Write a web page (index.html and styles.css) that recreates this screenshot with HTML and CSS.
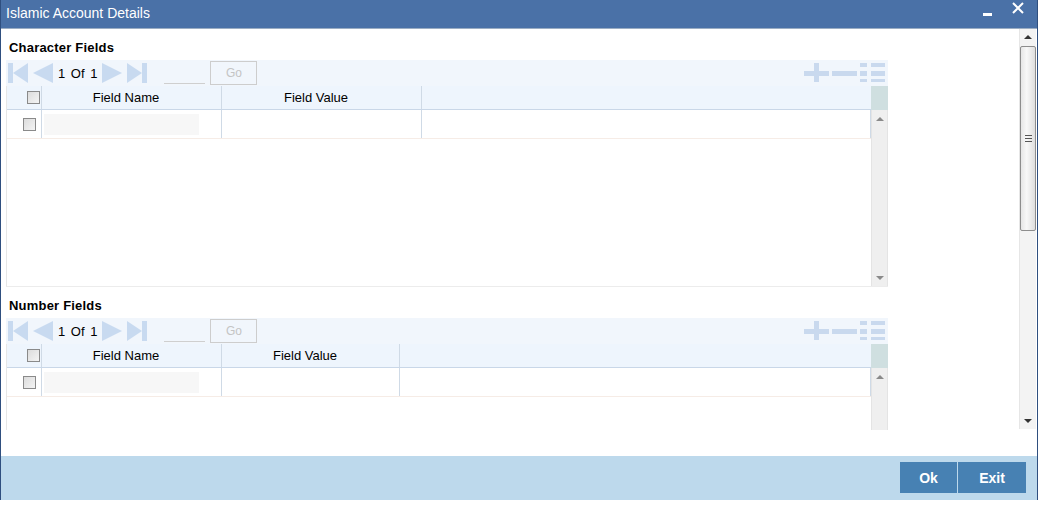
FILE: index.html
```html
<!DOCTYPE html>
<html>
<head>
<meta charset="utf-8">
<title>Islamic Account Details</title>
<link rel="stylesheet" href="styles.css">
</head>
<body>
<div class="window">
  <div class="titlebar">
    <span class="title">Islamic Account Details</span>
    <div class="win-ctrls">
      <span class="minimize"></span>
      <svg class="close" width="12" height="12" viewBox="0 0 12 12"><path d="M1 1 L11 11 M11 1 L1 11" stroke="#fff" stroke-width="2"/></svg>
    </div>
  </div>
  <div class="body">
    <div class="content">
      <section class="block block-char">
        <h2 class="heading">Character Fields</h2>
        <div class="toolbar">
          <div class="nav">
            <svg class="nav-ic" width="20" height="20" viewBox="0 0 20 20"><rect x="0" y="0" width="5" height="20" fill="#c8daf0"/><polygon points="20,0 20,20 5,10" fill="#c8daf0"/></svg>
            <svg class="nav-ic" width="20" height="20" viewBox="0 0 20 20"><polygon points="20,0 20,20 0,10" fill="#c8daf0"/></svg>
            <span class="pages">1 Of 1</span>
            <svg class="nav-ic" width="20" height="20" viewBox="0 0 20 20"><polygon points="0,0 0,20 20,10" fill="#c8daf0"/></svg>
            <svg class="nav-ic" width="20" height="20" viewBox="0 0 20 20"><polygon points="0,0 0,20 15,10" fill="#c8daf0"/><rect x="15" y="0" width="5" height="20" fill="#c8daf0"/></svg>
            <span class="goto"></span>
            <span class="go">Go</span>
          </div>
          <div class="actions">
            <svg width="26" height="20" viewBox="0 0 26 20"><rect x="0" y="8" width="25" height="5" fill="#c9d9ee"/><rect x="10" y="0" width="5" height="19" fill="#c9d9ee"/></svg>
            <svg width="26" height="20" viewBox="0 0 26 20"><rect x="0" y="8" width="25" height="5" fill="#c9d9ee"/></svg>
            <svg width="26" height="20" viewBox="0 0 26 20"><rect x="0" y="0" width="7" height="4" fill="#c9d9ee"/><rect x="11" y="0" width="14" height="4" fill="#c9d9ee"/><rect x="0" y="8" width="7" height="5" fill="#c9d9ee"/><rect x="11" y="8" width="14" height="5" fill="#c9d9ee"/><rect x="0" y="16" width="7" height="3" fill="#c9d9ee"/><rect x="11" y="16" width="14" height="3" fill="#c9d9ee"/></svg>
          </div>
        </div>
        <div class="grid-wrap tall">
          <div class="grid">
            <div class="hdr">
              <div class="c c-chk hchk"><span class="chk"></span></div>
              <div class="c c-name">Field Name</div>
              <div class="c c-val wide">Field Value</div>
              <div class="c c-rest"></div>
            </div>
            <div class="row">
              <div class="c c-chk"><span class="chk"></span></div>
              <div class="c c-name"><span class="inp"></span></div>
              <div class="c c-val wide"></div>
              <div class="c c-rest"></div>
            </div>
          </div>
          <div class="vscroll">
            <div class="vs-head"></div>
            <div class="vs-track"><span class="arr up"></span><span class="arr down"></span></div>
          </div>
        </div>
      </section>
      <section class="block block-num">
        <h2 class="heading">Number Fields</h2>
        <div class="toolbar">
          <div class="nav">
            <svg class="nav-ic" width="20" height="20" viewBox="0 0 20 20"><rect x="0" y="0" width="5" height="20" fill="#c8daf0"/><polygon points="20,0 20,20 5,10" fill="#c8daf0"/></svg>
            <svg class="nav-ic" width="20" height="20" viewBox="0 0 20 20"><polygon points="20,0 20,20 0,10" fill="#c8daf0"/></svg>
            <span class="pages">1 Of 1</span>
            <svg class="nav-ic" width="20" height="20" viewBox="0 0 20 20"><polygon points="0,0 0,20 20,10" fill="#c8daf0"/></svg>
            <svg class="nav-ic" width="20" height="20" viewBox="0 0 20 20"><polygon points="0,0 0,20 15,10" fill="#c8daf0"/><rect x="15" y="0" width="5" height="20" fill="#c8daf0"/></svg>
            <span class="goto"></span>
            <span class="go">Go</span>
          </div>
          <div class="actions">
            <svg width="26" height="20" viewBox="0 0 26 20"><rect x="0" y="8" width="25" height="5" fill="#c9d9ee"/><rect x="10" y="0" width="5" height="19" fill="#c9d9ee"/></svg>
            <svg width="26" height="20" viewBox="0 0 26 20"><rect x="0" y="8" width="25" height="5" fill="#c9d9ee"/></svg>
            <svg width="26" height="20" viewBox="0 0 26 20"><rect x="0" y="0" width="7" height="4" fill="#c9d9ee"/><rect x="11" y="0" width="14" height="4" fill="#c9d9ee"/><rect x="0" y="8" width="7" height="5" fill="#c9d9ee"/><rect x="11" y="8" width="14" height="5" fill="#c9d9ee"/><rect x="0" y="16" width="7" height="3" fill="#c9d9ee"/><rect x="11" y="16" width="14" height="3" fill="#c9d9ee"/></svg>
          </div>
        </div>
        <div class="grid-wrap short">
          <div class="grid">
            <div class="hdr">
              <div class="c c-chk hchk"><span class="chk"></span></div>
              <div class="c c-name">Field Name</div>
              <div class="c c-val narrow">Field Value</div>
              <div class="c c-rest"></div>
            </div>
            <div class="row">
              <div class="c c-chk"><span class="chk"></span></div>
              <div class="c c-name"><span class="inp"></span></div>
              <div class="c c-val narrow"></div>
              <div class="c c-rest"></div>
            </div>
          </div>
          <div class="vscroll">
            <div class="vs-head"></div>
            <div class="vs-track"><span class="arr up"></span><span class="arr down"></span></div>
          </div>
        </div>
      </section>
    </div>
    <div class="pscroll">
      <span class="parr up"></span>
      <div class="thumb"><span class="grip"></span></div>
      <div class="ptrack"></div>
      <span class="parr down"></span>
    </div>
  </div>
  <div class="spacer"></div>
  <div class="footer">
    <button class="btn btn-ok">Ok</button>
    <button class="btn btn-exit">Exit</button>
  </div>
</div>
</body>
</html>
```
FILE: styles.css
```css
* { box-sizing: border-box; }
html, body { margin: 0; padding: 0; background: #fff; }
body { font-family: "Liberation Sans", Arial, sans-serif; font-size: 13px; color: #000; }

.window {
  width: 1038px;
  height: 500px;
  border-left: 1px solid #2f4f7f;
  border-right: 1px solid #2f4f7f;
  display: flex;
  flex-direction: column;
}

.titlebar {
  height: 29px;
  background: #4a71a7;
  border-bottom: 1px solid #9badc3;
  display: flex;
  align-items: center;
  justify-content: space-between;
  padding: 0 13px 2px 5px;
  flex: none;
}
.title { color: #fff; font-size: 14px; }
.win-ctrls { display: flex; align-items: center; gap: 20px; }
.minimize { width: 9px; height: 3px; background: #fff; margin-top: 2px; }
.close { margin-top: -10px; }

.body {
  height: 401px;
  display: flex;
  flex: none;
}
.content {
  width: 1018px;
  padding-left: 5px;
  overflow: hidden;
}
.block-char { padding-top: 9px; }
.block-num { padding-top: 9px; }
.heading {
  margin: 0 0 2px 3px;
  font-size: 13px;
  font-weight: bold;
  line-height: 20px;
  height: 20px;
  letter-spacing: 0.2px;
}

.toolbar {
  width: 882px;
  height: 26px;
  background: #f1f6fc;
  display: flex;
  justify-content: space-between;
  align-items: center;
}
.nav { display: flex; align-items: center; padding-left: 2px; }
.nav-ic { display: block; margin-right: 5px; }
.pages { margin: 0 5px 0 0; word-spacing: 2px; }
.goto {
  width: 41px;
  height: 21px;
  border-bottom: 1px solid #cfcfcf;
  margin-left: 12px;
}
.go {
  width: 47px;
  height: 24px;
  border: 1px solid #cdcdcd;
  color: #c4c4c4;
  display: flex;
  align-items: center;
  justify-content: center;
  margin-left: 5px;
  font-size: 12px;
}
.actions { display: flex; align-items: center; gap: 2px; padding-right: 2px; }
.actions svg { display: block; }

.grid-wrap {
  width: 882px;
  display: flex;
  border-left: 1px solid #e6e6e6;
  border-bottom: 1px solid #ececec;
}
.grid-wrap.tall { height: 201px; }
.grid-wrap.short { height: 120px; border-bottom: none; }
.grid { width: 864px; }
.hdr {
  height: 24px;
  display: flex;
  background: #eef5fd;
  border-bottom: 1px solid #c9d7e8;
}
.row {
  height: 29px;
  display: flex;
  border-bottom: 1px solid #f6ece6;
}
.c {
  display: flex;
  align-items: center;
  justify-content: center;
  border-right: 1px solid #cfdae6;
}
.hdr .c { padding-right: 11px; }
.c-chk { width: 35px; }
.hdr .hchk { justify-content: flex-end; padding-right: 1px; }
.row .c-chk { justify-content: flex-start; padding-left: 16px; }
.c-name { width: 180px; justify-content: flex-start; padding-left: 2px; }
.hdr .c-name { justify-content: center; padding-left: 0; }
.c-val.wide { width: 200px; }
.c-val.narrow { width: 178px; }
.c-rest { flex: 1; border-right: none; }
.row .c-rest { border-right: 1px solid #cfdae6; }

.chk {
  width: 13px;
  height: 13px;
  border: 1px solid #8a8a8a;
  background: linear-gradient(135deg, #dcdcdc, #f4f4f4);
}
.row .chk { margin-top: 1px; }
.inp {
  width: 155px;
  height: 21px;
  background: #f7f7f7;
}

.vscroll {
  width: 17px;
  display: flex;
  flex-direction: column;
}
.vs-head { height: 24px; background: #cfdfe0; flex: none; }
.vs-track {
  flex: 1;
  background: #efefef;
  border-left: 1px solid #e4e4e4;
  border-right: 1px solid #e4e4e4;
  position: relative;
}
.arr {
  position: absolute;
  left: 4px;
  width: 0; height: 0;
  border-left: 4px solid transparent;
  border-right: 4px solid transparent;
}
.arr.up { top: 7px; border-bottom: 4px solid #8a8a8a; }
.arr.down { bottom: 6px; border-top: 4px solid #8a8a8a; }

.pscroll {
  width: 17px;
  display: flex;
  flex-direction: column;
  align-items: center;
  background: #f3f3f3;
  border-left: 1px solid #e6e6e6;
  height: 400px;
}
.parr {
  width: 0; height: 0;
  border-left: 4px solid transparent;
  border-right: 4px solid transparent;
  flex: none;
}
.parr.up { border-bottom: 4px solid #333; margin: 6px 0 7px; }
.parr.down { border-top: 4px solid #333; margin: 4px 0 6px; }
.thumb {
  width: 16px;
  height: 185px;
  border: 1px solid #8d8d8d;
  border-radius: 2px;
  background: linear-gradient(90deg, #e6e6e6, #f8f8f8 40%, #dedede);
  display: flex;
  align-items: center;
  justify-content: center;
  flex: none;
}
.grip {
  width: 7px;
  height: 7px;
  border-top: 1px solid #555;
  border-bottom: 1px solid #555;
  position: relative;
}
.grip::after {
  content: "";
  position: absolute;
  left: 0; right: 0; top: 2px;
  border-top: 1px solid #555;
}
.ptrack { flex: 1; }

.spacer { flex: none; height: 26px; }
.footer {
  flex: none;
  height: 44px;
  background: #bdd9ec;
  display: flex;
  justify-content: flex-end;
  align-items: flex-start;
  padding: 6px 11px 0 0;
  gap: 1px;
}
.btn {
  height: 31px;
  border: none;
  background: #4781b3;
  color: #fff;
  font-family: "Liberation Sans", Arial, sans-serif;
  font-size: 14px;
  font-weight: bold;
  padding: 0;
}
.btn-ok { width: 57px; }
.btn-exit { width: 68px; }
```
